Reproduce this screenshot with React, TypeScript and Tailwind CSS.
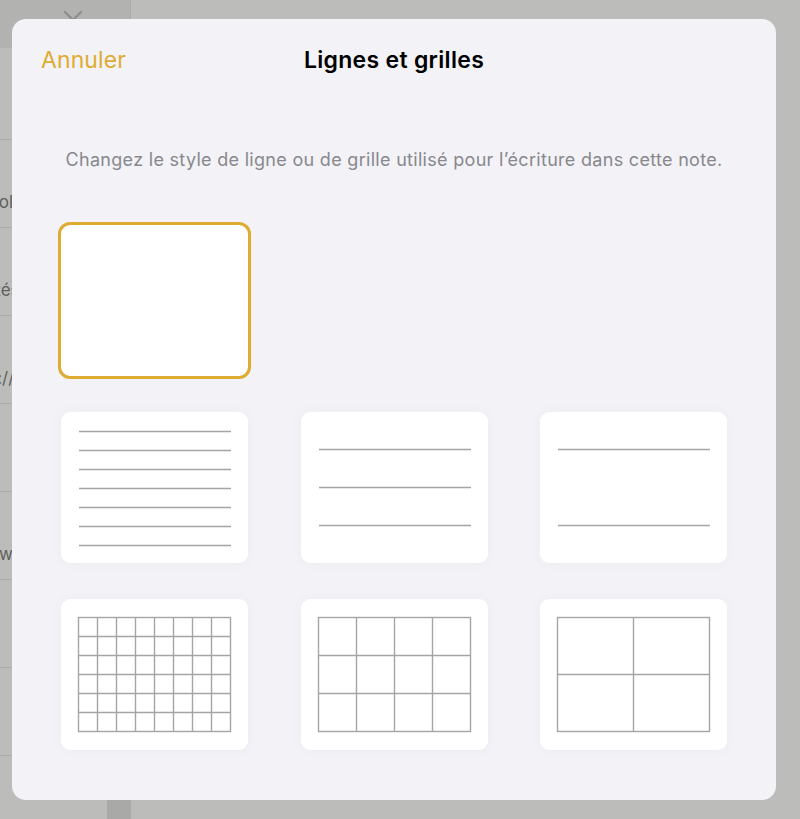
import type { ReactNode } from "react";

const STROKE = "#a5a5a5";

type Thumb =
	| { kind: "blank" }
	| { kind: "lines"; ys: number[] }
	| { kind: "grid"; cols: number; rows: number };

const THUMBS: Thumb[] = [
	{ kind: "blank" },
	{ kind: "lines", ys: [19, 38, 57, 76, 95, 114, 133] },
	{ kind: "lines", ys: [37, 75, 113] },
	{ kind: "lines", ys: [37, 113] },
	{ kind: "grid", cols: 8, rows: 6 },
	{ kind: "grid", cols: 4, rows: 3 },
	{ kind: "grid", cols: 2, rows: 2 },
];

function ThumbArt({ thumb }: { thumb: Thumb }) {
	if (thumb.kind === "blank") return null;
	if (thumb.kind === "lines") {
		return (
			<svg width="187" height="151" viewBox="0 0 187 151" aria-hidden>
				{thumb.ys.map((y) => (
					<line
						key={y}
						x1="18"
						x2="170"
						y1={y + 0.5}
						y2={y + 0.5}
						stroke={STROKE}
						strokeWidth="1.4"
					/>
				))}
			</svg>
		);
	}
	const x0 = 17.5;
	const y0 = 18.5;
	const w = 152;
	const h = 114;
	const cw = w / thumb.cols;
	const rh = h / thumb.rows;
	return (
		<svg width="187" height="151" viewBox="0 0 187 151" aria-hidden>
			<rect
				x={x0}
				y={y0}
				width={w}
				height={h}
				fill="none"
				stroke={STROKE}
				strokeWidth="1.4"
			/>
			{Array.from({ length: thumb.cols - 1 }).map((_, i) => (
				<line
					// biome-ignore lint/suspicious/noArrayIndexKey: static grid
					key={`c${i}`}
					x1={x0 + cw * (i + 1)}
					x2={x0 + cw * (i + 1)}
					y1={y0}
					y2={y0 + h}
					stroke={STROKE}
					strokeWidth="1.4"
				/>
			))}
			{Array.from({ length: thumb.rows - 1 }).map((_, i) => (
				<line
					// biome-ignore lint/suspicious/noArrayIndexKey: static grid
					key={`r${i}`}
					x1={x0}
					x2={x0 + w}
					y1={y0 + rh * (i + 1)}
					y2={y0 + rh * (i + 1)}
					stroke={STROKE}
					strokeWidth="1.4"
				/>
			))}
		</svg>
	);
}

function Card({ selected, children }: { selected?: boolean; children: ReactNode }) {
	return (
		<button
			type="button"
			className={`flex h-[151px] w-[187px] rounded-[9px] bg-white ${
				selected
					? "outline-[3px] outline-solid outline-[#deac30]"
					: "shadow-[0_0_14px_rgba(0,0,0,0.035)]"
			}`}
		>
			{children}
		</button>
	);
}

function SidebarRow({ text, offset }: { text?: string; offset?: number }) {
	return (
		<div className="flex h-[88px] items-end overflow-hidden border-b border-[#a9aaa7] pb-[15px]">
			{text && (
				<span
					className="whitespace-nowrap text-[17px] leading-5 text-[#5e5f5c]"
					style={{ marginLeft: offset }}
				>
					{text}
				</span>
			)}
		</div>
	);
}

export default function App() {
	return (
		<div className="relative h-[819px] w-[800px] overflow-hidden bg-[#bcbdba] font-['Inter','Noto_Sans',sans-serif]">
			{/* page underneath the sheet */}
			<div className="flex h-full">
				<aside className="flex w-[131px] flex-col border-r border-[#a9aaa7]">
					<div className="flex h-[48px] shrink-0 bg-[#b2b3b0] pl-[63px] pt-[10px]">
						<svg width="20" height="12" viewBox="0 0 20 12" aria-hidden>
							<path
								d="M2 2l8 8 8-8"
								fill="none"
								stroke="#8c8d8a"
								strokeWidth="2.2"
								strokeLinecap="round"
								strokeLinejoin="round"
							/>
						</svg>
					</div>
					<div className="h-[92px] shrink-0 border-b border-[#a9aaa7]" />
					<SidebarRow text="Politique" offset={-12} />
					<SidebarRow text="Résumé" offset={-10} />
					<SidebarRow text="https://" offset={-43} />
					<SidebarRow />
					<SidebarRow text="www.site" offset={-1} />
					<SidebarRow />
					<SidebarRow />
					<div className="flex flex-1 justify-end">
						<div className="w-[23px] bg-[#a9aaa7]" />
					</div>
				</aside>
				<div className="flex-1" />
			</div>

			{/* sheet */}
			<div className="absolute left-[12px] top-[19px] flex h-[781px] w-[764px] flex-col rounded-[14px] bg-[#f2f2f7]">
				<header className="relative flex h-[82px] shrink-0 items-center justify-center">
					<button
						type="button"
						className="absolute left-[29px] text-[23px] leading-7 tracking-[0.1px] text-[#deac30]"
					>
						Annuler
					</button>
					<h1 className="text-[23px] font-semibold leading-7 tracking-[0.3px] text-black">
						Lignes et grilles
					</h1>
				</header>
				<p className="mt-[47px] text-center text-[18px] leading-6 tracking-[0.3px] text-[#88888d]">
					Changez le style de ligne ou de grille utilisé pour l’écriture dans
					cette note.
				</p>
				<div className="mt-[53px] grid grid-cols-[187px_187px_187px] justify-between gap-y-[36px] px-[49px]">
					{THUMBS.map((thumb, i) => (
						<div
							// biome-ignore lint/suspicious/noArrayIndexKey: static list
							key={i}
							className={i === 0 ? "col-span-3" : ""}
						>
							<Card selected={i === 0}>
								<ThumbArt thumb={thumb} />
							</Card>
						</div>
					))}
				</div>
			</div>
		</div>
	);
}
